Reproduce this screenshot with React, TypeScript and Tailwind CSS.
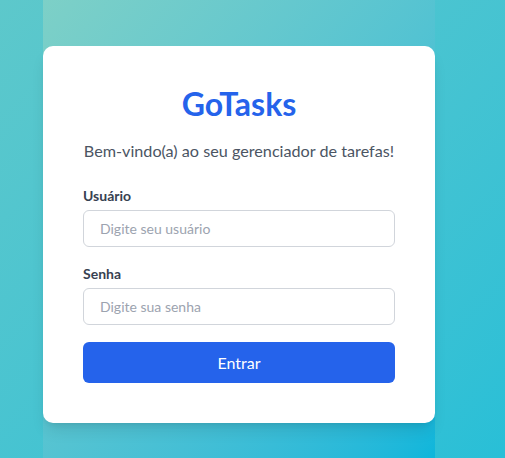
const Login = () => {
  const handleLogin = (e: React.FormEvent) => {
    e.preventDefault();
  };

  return (
    <div className="min-h-screen bg-linear-to-br from-[#5dc8cb] to-[#28bfd7] pl-[43px] font-['Lato',sans-serif]">
      <div className="min-h-screen w-[392px] bg-linear-to-br from-[#7dd0c7] to-[#0db6db] pt-[46px]">
        <form
          className="rounded-[10px] bg-white px-10 pt-10 pb-10 shadow-lg"
          onSubmit={handleLogin}
        >
          <h1 className="text-center text-[32px] leading-9 font-bold text-[#2563eb]">
            GoTasks
          </h1>
          <p className="mt-[17px] text-center text-[16.2px] leading-6 whitespace-nowrap text-[#4b5563]">
            Bem-vindo(a) ao seu gerenciador de tarefas!
          </p>
          <div className="mt-[23px] flex flex-col gap-1">
            <label className="text-[14px] leading-5 font-bold text-[#374151]">
              Usuário
            </label>
            <input
              className="h-[37px] w-full rounded-md border border-[#d1d5db] px-4 text-[14px] outline-none placeholder:text-[#9ca3af]"
              type="text"
              name="userName"
              placeholder="Digite seu usuário"
            />
          </div>
          <div className="mt-[17px] flex flex-col gap-1">
            <label className="text-[14px] leading-5 font-bold text-[#374151]">
              Senha
            </label>
            <input
              className="h-[37px] w-full rounded-md border border-[#d1d5db] px-4 text-[14px] outline-none placeholder:text-[#9ca3af]"
              type="password"
              name="userPassword"
              placeholder="Digite sua senha"
            />
          </div>
          <button
            className="mt-[17px] h-[41px] w-full rounded-md bg-[#2563eb] text-[16px] text-white"
            type="submit"
          >
            Entrar
          </button>
        </form>
      </div>
    </div>
  );
};

export default Login;
